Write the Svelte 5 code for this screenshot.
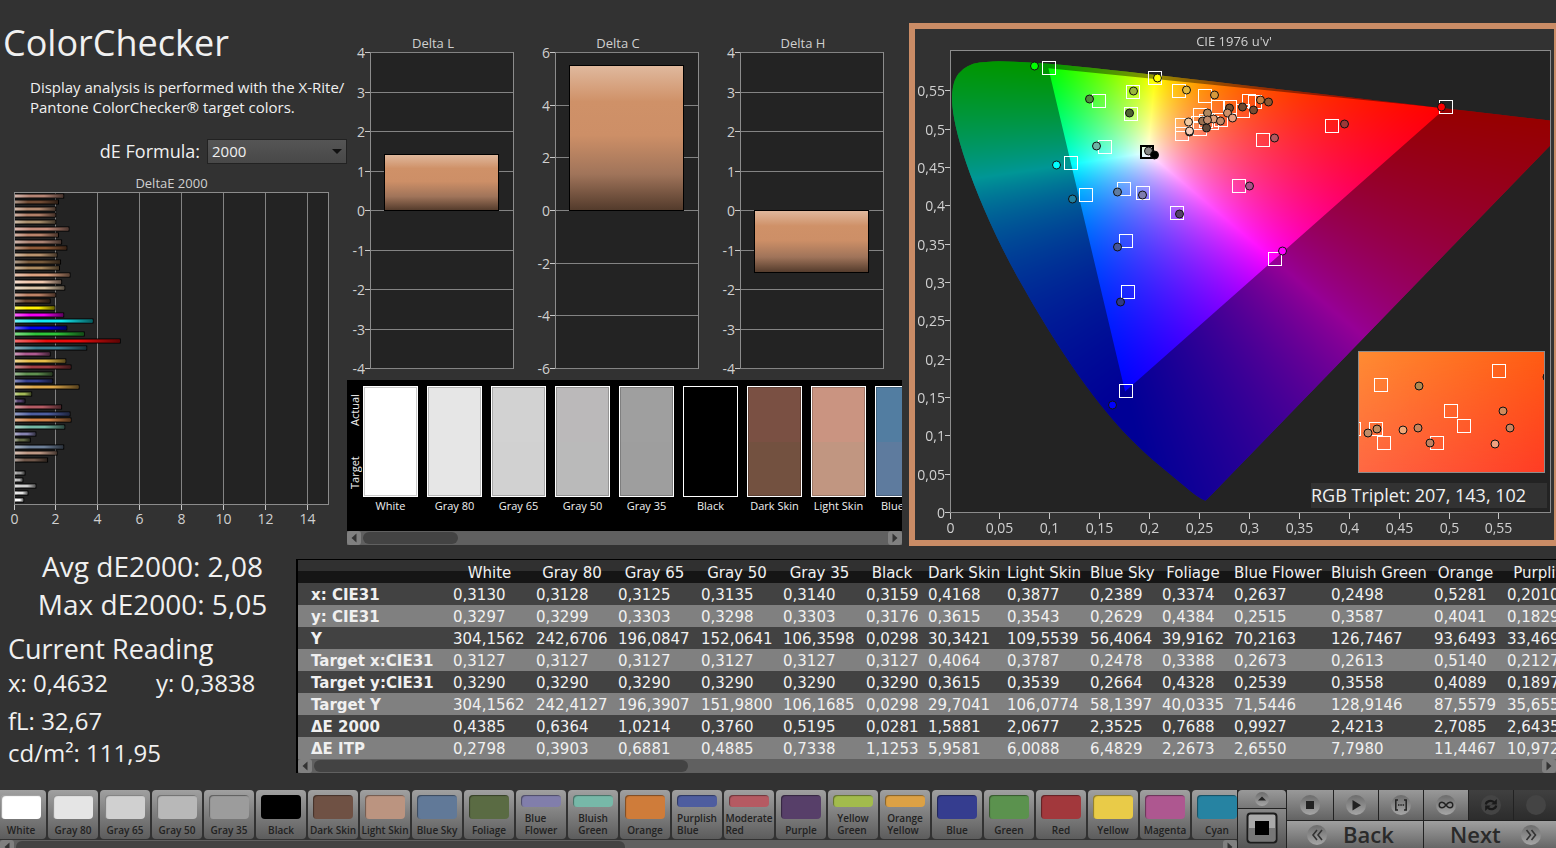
<script>
  import { onMount } from 'svelte';

  const deBars = [
    [2.35, '#b58474'], [2.1, '#6f4a33'], [1.97, '#b58c72'], [1.97, '#b07f68'], [1.97, '#a98e6c'],
    [2.6, '#c68d7c'], [2.1, '#b8836b'], [2.25, '#ad8474'], [2.5, '#8f5a38'], [2.03, '#b9936f'],
    [2.2, '#775a3c'], [2.15, '#ab8a5f'], [2.65, '#dca281'], [2.25, '#f0c8ae'], [2.4, '#ddc6a8'],
    [1.97, '#bd8367'], [1.7, '#68452f'], [1.93, '#fff200'], [2.35, '#f400f4'], [3.75, '#12e8f0'],
    [2.5, '#0000ee'], [3.33, '#2fc43a'], [5.05, '#e80c0c'], [3.45, '#3f7d8f'], [1.7, '#ad5a90'],
    [2.45, '#e6bc48'], [2.7, '#a03d42'], [1.83, '#5f8f50'], [1.83, '#35408f'], [3.08, '#dca64a'],
    [0.82, '#a5bb58'], [0.5, '#574470'], [2.25, '#b35b64'], [2.65, '#4d5ea0'], [2.7, '#d48347'],
    [2.4, '#73b8a4'], [1.02, '#8582b0'], [0.75, '#646b48'], [2.35, '#6d7f98'], [2.03, '#bd9784'],
    [1.58, '#6f5649'], [0, '#000000'], [0.5, '#999999'], [0.4, '#bbbbbb'], [1.02, '#d0d0d0'],
    [0.64, '#e6e6e6'], [0.44, '#ffffff']
  ];

  const deltas = [
    { title: 'Delta L', max: 4, step: 1, value: 1.42 },
    { title: 'Delta C', max: 6, step: 2, value: 5.5 },
    { title: 'Delta H', max: 4, step: 1, value: -1.56 }
  ];
  const ticksOf = (d) => {
    const list = [];
    for (let t = d.max; t >= -d.max; t -= d.step) list.push(t);
    return list;
  };
  const yOf = (d, t) => Math.round(176 - (t / d.max) * 158) + 0.5;

  const patches = [
    ['White', '#ffffff', '#ffffff'], ['Gray 80', '#e6e6e6', '#e6e6e6'], ['Gray 65', '#d2d2d2', '#d1d1d1'],
    ['Gray 50', '#bbb9ba', '#bababa'], ['Gray 35', '#9f9f9f', '#9e9e9e'], ['Black', '#000000', '#000000'],
    ['Dark Skin', '#7a5043', '#735140'], ['Light Skin', '#ca9481', '#c19681'], ['Blue Sky', '#527da1', '#5e7b9e']
  ];

  const columns = [
    ['White', 83], ['Gray 80', 82], ['Gray 65', 83], ['Gray 50', 82], ['Gray 35', 83], ['Black', 62],
    ['Dark Skin', 79], ['Light Skin', 83], ['Blue Sky', 72], ['Foliage', 72], ['Blue Flower', 97],
    ['Bluish Green', 103], ['Orange', 73], ['Purplish Blue', 120]
  ];
  const rows = [
    ['x: CIE31', '0,3130 0,3128 0,3125 0,3135 0,3140 0,3159 0,4168 0,3877 0,2389 0,3374 0,2637 0,2498 0,5281 0,2010'],
    ['y: CIE31', '0,3297 0,3299 0,3303 0,3298 0,3303 0,3176 0,3615 0,3543 0,2629 0,4384 0,2515 0,3587 0,4041 0,1829'],
    ['Y', '304,1562 242,6706 196,0847 152,0641 106,3598 0,0298 30,3421 109,5539 56,4064 39,9162 70,2163 126,7467 93,6493 33,4690'],
    ['Target x:CIE31', '0,3127 0,3127 0,3127 0,3127 0,3127 0,3127 0,4064 0,3787 0,2478 0,3388 0,2673 0,2613 0,5140 0,2127'],
    ['Target y:CIE31', '0,3290 0,3290 0,3290 0,3290 0,3290 0,3290 0,3615 0,3539 0,2664 0,4328 0,2539 0,3558 0,4089 0,1897'],
    ['Target Y', '304,1562 242,4127 196,3907 151,9800 106,1685 0,0298 29,7041 106,0774 58,1397 40,0335 71,5446 128,9146 87,5579 35,6550'],
    ['ΔE 2000', '0,4385 0,6364 1,0214 0,3760 0,5195 0,0281 1,5881 2,0677 2,3525 0,7688 0,9927 2,4213 2,7085 2,6435'],
    ['ΔE ITP', '0,2798 0,3903 0,6881 0,4885 0,7338 1,1253 5,9581 6,0088 6,4829 2,2673 2,6550 7,7980 11,4467 10,9720']
  ];

  const tiles = [
    ['White', '#ffffff'], ['Gray 80', '#e5e5e5'], ['Gray 65', '#d0d0d0'], ['Gray 50', '#b8b8b8'], ['Gray 35', '#9c9c9c'],
    ['Black', '#000000'], ['Dark Skin', '#6f5144'], ['Light Skin', '#bb9480'], ['Blue Sky', '#617998'], ['Foliage', '#5a6b43'],
    ['Blue Flower', '#817eab', 2], ['Bluish Green', '#77b8a8', 2], ['Orange', '#cf7c3a'], ['Purplish Blue', '#4e5d9f', 2],
    ['Moderate Red', '#b55a62', 2], ['Purple', '#573f69'], ['Yellow Green', '#a2bb4d', 2], ['Orange Yellow', '#dca145', 2],
    ['Blue', '#353d8f'], ['Green', '#5b924e'], ['Red', '#a2383c'], ['Yellow', '#e9cb48'], ['Magenta', '#ae5790'], ['Cyan', '#2683a2']
  ];

  const targets = [
    [1049, 68], [1155, 78], [1179, 91], [1205, 96], [1099, 101], [1133, 92], [1131, 114], [1105, 147], [1071, 163],
    [1086, 195], [1124, 189], [1143, 193], [1177, 213], [1126, 241], [1128, 292], [1126, 391], [1182, 125], [1182, 134],
    [1200, 115], [1200, 129], [1218, 107], [1198, 123], [1212, 123], [1221, 120], [1249, 101], [1255, 102], [1230, 107],
    [1243, 111], [1332, 126], [1263, 140], [1239, 186], [1275, 259], [1446, 107], [1206, 121]
  ];
  const readings = [
    [1034, 66, '#00ff00'], [1157, 78, '#ffff00'], [1186, 90, '#e0b93c'], [1214, 95, '#d69a3c'], [1133, 91, '#9ab83c'],
    [1089, 99, '#4f8c3c'], [1129, 113, '#4d6330'], [1096, 146, '#6cb5a5'], [1056, 165, '#00ffff'], [1072, 199, '#2080a0'],
    [1117, 192, '#5f7ba0'], [1142, 195, '#7f7db0'], [1179, 214, '#54406a'], [1117, 247, '#46569b'], [1120, 302, '#303a86'],
    [1112, 405, '#0000ff'], [1148, 151, '#888888'], [1154, 155, '#000000'], [1189, 132, '#604838'], [1188, 122, '#f2c9a0'],
    [1189, 131, '#f8d0b8'], [1202, 121, '#9a7050'], [1206, 128, '#604838'], [1207, 113, '#b08860'], [1213, 119, '#e0a078'],
    [1207, 120, '#c08c6c'], [1220, 121, '#c08868'], [1229, 108, '#704c30'], [1227, 113, '#d09068'], [1232, 118, '#e8a080'],
    [1242, 107, '#6e4a30'], [1253, 110, '#7a4a30'], [1260, 100, '#c87c3c'], [1268, 102, '#905830'], [1344, 124, '#9c3838'],
    [1274, 138, '#b45860'], [1249, 186, '#a85088'], [1282, 251, '#ff00ff'], [1441, 107, '#ff0000']
  ];
  const insetTargets = [[1381, 385], [1499, 371], [1451, 411], [1464, 426], [1376, 429], [1384, 443], [1437, 443], [1354, 429]];
  const insetReadings = [
    [1419, 386, '#b08850'], [1503, 411, '#cf8a5c'], [1510, 428, '#c88460'], [1495, 444, '#f0a080'], [1430, 443, '#c08060'],
    [1418, 428, '#c8845c'], [1403, 430, '#f0a878'], [1377, 429, '#c08c60'], [1368, 433, '#c08c68'], [1547, 377, '#402010']
  ];
  const axis = Array.from({ length: 12 }, (_, i) => i * 5);
  const axisLabel = (n) => (n === 0 ? '0' : String(n / 100).replace('.', ','));

  // CIE 1931 chromaticities of the spectral locus, 380 to 700 nm, closed along the purple line.
  const locus = [
    [0.1741, 0.005], [0.1733, 0.0048], [0.1689, 0.0069], [0.1644, 0.0109], [0.1566, 0.0177],
    [0.151, 0.0227], [0.144, 0.0297], [0.1355, 0.0399], [0.1241, 0.0578], [0.1096, 0.0868], [0.0913, 0.1327],
    [0.0687, 0.2007], [0.0454, 0.295], [0.0235, 0.4127], [0.0082, 0.5384], [0.0039, 0.6548], [0.0139, 0.7502],
    [0.0389, 0.812], [0.0743, 0.8338], [0.1142, 0.8262], [0.1547, 0.8059], [0.2296, 0.7543], [0.3016, 0.6923],
    [0.3731, 0.6245], [0.4441, 0.5547], [0.5125, 0.4866], [0.5752, 0.4242], [0.627, 0.3725], [0.6658, 0.334],
    [0.6915, 0.3083], [0.719, 0.2809], [0.7347, 0.2653], [0.7235, 0.2601], [0.1965, 0.0154]
  ];
  const gamut = [[0.68, 0.32], [0.265, 0.69], [0.15, 0.06]];

  let canvas;
  onMount(() => {
    const w = 600, h = 462, sx = 998, sy = 770;
    const toPx = ([x, y]) => {
      const d = -2 * x + 12 * y + 3;
      return [(4 * x / d) * sx, h - (9 * y / d) * sy];
    };
    const off = document.createElement('canvas');
    off.width = w;
    off.height = h;
    const octx = off.getContext('2d');
    const img = octx.createImageData(w, h);
    for (let j = 0; j < h; j++) {
      for (let i = 0; i < w; i++) {
        const u = i / sx, v = (h - j) / sy;
        const X = (9 * u) / (4 * v), Z = (12 - 3 * u - 20 * v) / (4 * v);
        const rgb = [
          2.4935 * X - 0.9314 - 0.4027 * Z,
          -0.8295 * X + 1.7627 + 0.0236 * Z,
          0.0358 * X - 0.0762 + 0.9569 * Z
        ].map((c) => Math.max(0, c));
        const m = Math.max(...rgb);
        const k = (j * w + i) * 4;
        for (let c = 0; c < 3; c++) img.data[k + c] = (255 * rgb[c]) / m;
        img.data[k + 3] = 255;
      }
    }
    octx.putImageData(img, 0, 0);
    const ctx = canvas.getContext('2d');
    const mid = (a, b) => [(a[0] + b[0]) / 2, (a[1] + b[1]) / 2];
    const outline = locus.map(toPx);
    ctx.beginPath();
    ctx.moveTo(...mid(outline[outline.length - 1], outline[0]));
    outline.forEach((p, i) => ctx.quadraticCurveTo(...p, ...mid(p, outline[(i + 1) % outline.length])));
    ctx.closePath();
    ctx.clip();
    ctx.drawImage(off, 0, 0);
    ctx.beginPath();
    ctx.rect(0, 0, w, h);
    gamut.map(toPx).forEach(([x, y], i) => (i ? ctx.lineTo(x, y) : ctx.moveTo(x, y)));
    ctx.closePath();
    ctx.fillStyle = 'rgba(0,0,0,0.41)';
    ctx.fill('evenodd');
  });
</script>

{#snippet scrollbar(thumb)}
  <div class="scroll">
    <button class="arrow" aria-label="Scroll left"><svg viewBox="0 0 14 14"><path d="M9.500 2.500v9L4.500 7z" /></svg></button>
    <div class="track"><div class="thumb" style:width={thumb}></div></div>
    <button class="arrow" aria-label="Scroll right"><svg viewBox="0 0 14 14"><path d="M4.500 2.500v9L9.500 7z" /></svg></button>
  </div>
{/snippet}

<main>
  <section class="top">
    <div class="intro">
      <h1>ColorChecker</h1>
      <p>Display analysis is performed with the X-Rite/<br />Pantone ColorChecker® target colors.</p>
      <div class="formula">
        <label for="formula">dE Formula:</label>
        <div class="select">
          <select id="formula"><option>2000</option></select>
          <svg viewBox="0 0 10 6"><path d="M0 0h10L5 5z" /></svg>
        </div>
      </div>
      <svg class="chart" viewBox="0 174 347 358" role="img" aria-label="DeltaE 2000">
        <defs>
          <linearGradient id="sheen">
            <stop offset="0" stop-color="#fff" stop-opacity=".4" />
            <stop offset=".3" stop-color="#fff" stop-opacity="0" />
            <stop offset=".6" stop-color="#000" stop-opacity="0" />
            <stop offset="1" stop-color="#000" stop-opacity=".6" />
          </linearGradient>
        </defs>
        <text class="title" x="171.500" y="188" text-anchor="middle">DeltaE 2000</text>
        <rect x="14.500" y="192.500" width="314" height="312" class="frame" />
        {#each [0, 2, 4, 6, 8, 10, 12, 14] as t}
          {@const x = Math.round(13.500 + t * 20.93) + 0.5}
          <path class="grid" d="M{x} 193V504" />
          <path class="tick" d="M{x} 505v5" />
          <text x={x} y="524" text-anchor="middle">{t}</text>
        {/each}
        {#each deBars as [v, color], i}
          {@const y = Math.round(193.600 + i * 6.61)}
          {#if v > 0}
            <rect x="15" y={y - 0.5} width={v * 20.93} height="5" fill="#000" />
            <rect x="15" y={y + 0.5} width={v * 20.93 - 1} height="3" fill={color} />
            <rect x="15" y={y + 0.5} width={v * 20.93 - 1} height="3" fill="url(#sheen)" />
          {/if}
        {/each}
      </svg>
    </div>

    <div class="middle">
      <div class="deltas">
        {#each deltas as d, i}
          <svg class="chart" viewBox="0 0 185 345" role="img" aria-label={d.title}>
            <defs>
              <linearGradient id="skin{i}" x2="0" y2="1">
                <stop offset="0" stop-color="#e0b99e" />
                <stop offset=".25" stop-color="#cf9168" />
                <stop offset=".48" stop-color="#cd8f67" />
                <stop offset=".75" stop-color="#a0745a" />
                <stop offset="1" stop-color="#523a2b" />
              </linearGradient>
            </defs>
            <text class="title" x="86" y="14" text-anchor="middle">{d.title}</text>
            <rect x="23.500" y="18.500" width="143" height="316" class="frame" />
            {#each ticksOf(d) as t}
              <path class="grid" d="M24 {yOf(d, t)}H166" />
              <path class="tick" d="M18 {yOf(d, t)}h5" />
              <text x="18" y={yOf(d, t) + 5} text-anchor="end">{t}</text>
            {/each}
            <rect x="37.500" y={Math.min(yOf(d, 0), yOf(d, d.value))} width="114" height={Math.abs(yOf(d, d.value) - yOf(d, 0))} fill="url(#skin{i})" stroke="#000" />
          </svg>
        {/each}
      </div>
      <div class="compare">
        <div class="patches">
          <div class="side"><span>Actual</span><span>Target</span></div>
          {#each patches as [name, actual, target]}
            <figure>
              <div class="patch" style:--actual={actual} style:--target={target}></div>
              <figcaption>{name}</figcaption>
            </figure>
          {/each}
        </div>
        {@render scrollbar('95px')}
      </div>
    </div>

    <div class="cie">
      <div class="plot">
        <div class="area"><canvas bind:this={canvas} width="600" height="462"></canvas></div>
        <svg class="chart" viewBox="915 29 639 511" role="img" aria-label="CIE 1976 u'v'">
          <defs>
            <linearGradient id="insetTop"><stop stop-color="#ff8c32" /><stop offset="1" stop-color="#ff5c12" /></linearGradient>
            <linearGradient id="insetBottom"><stop stop-color="#ff6844" /><stop offset="1" stop-color="#ff3c24" /></linearGradient>
            <linearGradient id="fade" x2="0" y2="1"><stop stop-color="#000" /><stop offset="1" stop-color="#fff" /></linearGradient>
            <mask id="lower"><rect x="1358" y="351" width="187" height="121" fill="url(#fade)" /></mask>
            <clipPath id="insetClip"><rect x="1359" y="352" width="185" height="120" /></clipPath>
          </defs>
          <text class="title" x="1234" y="46" text-anchor="middle">CIE 1976 u'v'</text>
          <rect class="outline" x="950.500" y="50.500" width="600" height="462" />
          {#each axis as n}
            {@const x = Math.round(949.500 + n * 9.98) + 0.5}
            {@const y = Math.round(512 - n * 7.67) + 0.5}
            <path class="tick" d="M{x} 513v6M{950} {y}h-5" />
            <text x={x} y="533" text-anchor="middle">{axisLabel(n)}</text>
            <text x="945" y={y + 5.5} text-anchor="end">{axisLabel(n)}</text>
          {/each}
          {#each targets as [x, y]}
            <rect class="target" x={x - 6.5} y={y - 6.5} width="13" height="13" />
          {/each}
          <rect class="target neutral" x="1141" y="146" width="12" height="12" />
          {#each readings as [x, y, c]}
            <circle cx={x + 0.5} cy={y} r="4" fill={c} class="reading" />
          {/each}
          <rect x="1358" y="351" width="187" height="122" fill="url(#insetTop)" />
          <rect x="1358" y="351" width="187" height="122" fill="url(#insetBottom)" mask="url(#lower)" />
          <g clip-path="url(#insetClip)">
            {#each insetTargets as [x, y]}
              <rect class="target" x={x - 6.5} y={y - 6.5} width="13" height="13" />
            {/each}
            {#each insetReadings as [x, y, c]}
              <circle cx={x} cy={y} r="4" fill={c} class="reading" />
            {/each}
          </g>
          <rect class="outline" x="1358.500" y="351.500" width="186" height="121" />
          <rect x="1311" y="483" width="236" height="25" fill="#323232" />
          <text class="triplet" x="1311" y="502">RGB Triplet: 207, 143, 102</text>
        </svg>
      </div>
    </div>
  </section>

  <section class="data">
    <div class="stats">
      <p class="big">Avg dE2000: 2,08</p>
      <p class="big">Max dE2000: 5,05</p>
      <h2>Current Reading</h2>
      <p class="pair"><span>x: 0,4632</span><span>y: 0,3838</span></p>
      <p class="first">fL: 32,67</p>
      <p>cd/m²: 111,95</p>
    </div>
    <div class="sheet">
      <div class="clip">
        <table>
          <colgroup><col style:width="155px" />{#each columns as [, w]}<col style:width="{w}px" />{/each}</colgroup>
          <thead><tr><td></td>{#each columns as [name]}<th scope="col">{name}</th>{/each}</tr></thead>
          <tbody>
            {#each rows as [name, values]}
              <tr><th scope="row">{name}</th>{#each values.split(' ') as v}<td>{v}</td>{/each}</tr>
            {/each}
          </tbody>
        </table>
      </div>
      {@render scrollbar('374px')}
    </div>
  </section>

  <footer>
    <div class="strip">
      <div class="tiles">
        {#each tiles as [name, color, lines]}
          <button class="tile" class:tall={lines}>
            <i style:background={color}></i>
            <span>{#if lines}{name.split(' ')[0]}<br />{name.split(' ')[1]}{:else}{name}{/if}</span>
          </button>
        {/each}
      </div>
      {@render scrollbar('609px')}
    </div>
    <div class="mode">
      <button class="up" aria-label="Expand"><svg viewBox="0 0 16 16"><circle cx="8" cy="8" r="7" fill="url(#knob)" /><path d="M4 9.500h8L8 5.500z" fill="#222" /></svg></button>
      <button class="display" aria-label="Pattern window">
        <svg viewBox="0 0 32 32"><rect x="1.500" y="1.500" width="29" height="29" rx="3" fill="#aaa" stroke="#1c1c1c" stroke-width="2" /><path d="M3 16h26v13H3z" fill="#777" /><rect x="9" y="9" width="14" height="14" fill="#000" /></svg>
      </button>
    </div>
    <div class="controls">
      <svg class="defs" aria-hidden="true"><defs><linearGradient id="knob" x2="0" y2="1"><stop stop-color="#6c6c6c" /><stop offset="1" stop-color="#a6a6a6" /></linearGradient></defs></svg>
      <div class="keys">
        <button aria-label="Stop"><svg viewBox="0 0 20 20"><circle cx="10" cy="10" r="10" fill="url(#knob)" /><path d="M6 6h8v8H6z" fill="#222" /></svg></button>
        <button aria-label="Play"><svg viewBox="0 0 20 20"><circle cx="10" cy="10" r="10" fill="url(#knob)" /><path d="M6.500 5v10.500L15 10.200z" fill="#222" /></svg></button>
        <button aria-label="Read range"><svg viewBox="0 0 20 20"><circle cx="10" cy="10" r="10" fill="url(#knob)" /><path d="M7 5H4.800v10H7M13 5h2.200v10H13M7 10h1.500M9.300 10h1.500M11.600 10h1.500" fill="none" stroke="#222" stroke-width="1.500" /></svg></button>
        <button aria-label="Continuous"><svg viewBox="0 0 20 20"><circle cx="10" cy="10" r="10" fill="url(#knob)" /><path d="M10 10C8.500 8 7.500 7.200 6 7.200a2.800 2.800 0 0 0 0 5.600C7.500 12.800 8.500 12 10 10s2.500-2.800 4-2.800a2.800 2.800 0 0 1 0 5.600C12.500 12.800 11.500 12 10 10z" fill="none" stroke="#222" stroke-width="1.400" /></svg></button>
        <button class="off" aria-label="Refresh"><svg viewBox="0 0 20 20"><circle cx="10" cy="10" r="10" fill="#444" /><path d="M4.800 9.500c.5-3.200 5-5 8.200-2.400M15.200 10.500c-.5 3.200-5 5-8.200 2.400" fill="none" stroke="#1a1a1a" stroke-width="2.200" /><path d="M15.800 4v5.500h-5.500zM4.200 16v-5.500h5.500z" fill="#1a1a1a" /></svg></button>
        <button class="off" aria-label="Record"><svg viewBox="0 0 20 20"><circle cx="10" cy="10" r="10" fill="#444" /></svg></button>
      </div>
      <div class="nav">
        <button class="back"><svg viewBox="0 0 20 20"><circle cx="10" cy="10" r="10" fill="url(#knob)" /><path d="M10 5l-4 5 4 5M15 5l-4 5 4 5" fill="none" stroke="#333" stroke-width="1.600" /></svg>Back</button>
        <button class="next">Next<svg viewBox="0 0 20 20"><circle cx="10" cy="10" r="10" fill="url(#knob)" /><path d="M5.500 5l4 5-4 5M10.500 5l4 5-4 5" fill="none" stroke="#333" stroke-width="1.600" /></svg></button>
      </div>
    </div>
  </footer>
</main>

<style>
  :global(body) { background: #323232; }
  main {
    height: 100vh; overflow: hidden; display: flex; flex-direction: column;
    font-family: "Open Sans", "Noto Sans", sans-serif; color: #f0f0f0; background: #323232;
  }
  h1, h2, p, figure { margin: 0; font-weight: 400; }
  button { font: inherit; border: 0; padding: 0; margin: 0; color: #222; }

  .top { display: grid; grid-template-columns: 347fr 555fr 654fr; flex: none; }
  .intro { padding-top: 17px; min-width: 0; }
  h1 { font-size: 36px; line-height: 52px; padding-left: 3px; white-space: nowrap; }
  .intro p { font-size: 15px; line-height: 20px; margin-top: 8px; padding-left: 30px; white-space: nowrap; }
  .formula { display: flex; justify-content: flex-end; align-items: center; gap: 7px; margin: 21px 0 10px; height: 26px; }
  .formula label { font-size: 18px; }
  .select { position: relative; width: 140px; }
  .select select {
    appearance: none; width: 100%; height: 25px; padding: 0 4px; border: 1px solid #222; border-radius: 0;
    font: 15px "Open Sans", sans-serif; color: #f0f0f0; background: linear-gradient(#555, #484848);
  }
  .select svg { position: absolute; right: 5px; top: 10px; width: 10px; height: 6px; fill: #111; }

  .chart { display: block; width: 100%; height: auto; }
  .chart text { font-size: 14px; fill: #d0d0d0; }
  .chart .title { font-size: 13px; }
  .chart .triplet { font-size: 18px; fill: #f0f0f0; }
  .frame { fill: #232323; stroke: #8c8c8c; }
  .grid { stroke: #838383; }
  .tick { stroke: #c8c8c8; }
  .outline { fill: none; stroke: #8c8c8c; }
  .target { fill: none; stroke: #fff; stroke-width: 1; }
  .neutral { stroke: #000; stroke-width: 2; }
  .reading { stroke: #111; }

  .middle { padding-top: 34px; min-width: 0; display: flex; flex-direction: column; }
  .deltas { display: grid; grid-template-columns: repeat(3, 1fr); }
  .compare { margin-top: 1px; background: #000; }
  .patches { display: flex; height: 151px; overflow: hidden; box-sizing: border-box; padding-top: 6px; }
  .side {
    flex: none; width: 16px; height: 111px; box-sizing: border-box; padding: 8px 0; display: flex; flex-direction: row-reverse;
    justify-content: space-between; writing-mode: vertical-rl; transform: rotate(180deg); font-size: 11px; line-height: 16px;
  }
  figure { flex: none; width: 64px; }
  .patch {
    width: 55px; height: 111px; box-sizing: border-box; border: 1px solid #fff;
    background: linear-gradient(var(--actual) 50%, var(--target) 50%); box-shadow: inset 0 0 0 1px #0003;
  }
  figcaption { width: 55px; font-size: 11px; line-height: 18px; text-align: center; white-space: nowrap; }

  .scroll { display: flex; height: 14px; background: #606060; }
  .arrow { flex: none; width: 14px; height: 14px; background: #808080; border-radius: 3px; }
  .arrow svg { display: block; fill: #333; }
  .track { flex: 1; padding: 1px 2px; }
  .thumb { height: 12px; max-width: 100%; border-radius: 6px; background: #434343; }

  .cie { margin: 23px 0 0 7px; border: 6px solid #ca8c66; border-right-width: 2px; align-self: start; min-width: 0; }
  .plot { position: relative; }
  .plot .chart { position: relative; }
  .area { position: absolute; left: 5%; left: 5.480%; top: 4.300%; width: 93.900%; height: 90.410%; background: #232323; }
  .area canvas { display: block; width: 100%; height: 100%; }

  .data { display: flex; flex: none; margin-top: 13px; }
  .stats { flex: none; width: 296px; font-size: 24px; line-height: 32px; margin-top: -12px; }
  .stats p, h2 { padding-left: 8px; }
  .stats .big { font-size: 28px; line-height: 38px; padding: 0 0 0 9px; text-align: center; }
  h2 { font-size: 27px; line-height: 36px; margin-top: 8px; }
  .pair { display: flex; gap: 48px; }
  .stats .first { margin-top: 6px; }
  .sheet { flex: 1; min-width: 0; border-top: 1px solid #000; border-left: 2px solid #000; }
  .clip { overflow: hidden; }
  table { table-layout: fixed; width: 1329px; border-collapse: collapse; font: 15px "DejaVu Sans", sans-serif; }
  tr { height: 22px; }
  th, td { padding: 2px 0 0; line-height: 20px; text-align: left; white-space: nowrap; }
  tbody td { color: #f0f0f0; }
  tbody th { padding-left: 13px; font-weight: 700; }
  thead tr { height: 23px; background: linear-gradient(#303030 50%, #151515 50%); }
  thead th { font-weight: 400; padding-right: 10px; text-align: center; }
  tbody tr { background: #424242; }
  tbody tr:nth-child(even) { background: #808080; }

  footer { display: flex; flex: none; height: 58px; margin-top: auto; overflow: hidden; }
  .strip { flex: 1; min-width: 0; }
  .tiles { display: flex; gap: 2px; overflow: hidden; height: 49px; margin-bottom: 1px; }
  .tile {
    flex: none; width: 50px; height: 49px; border-radius: 4px; background: linear-gradient(#a0a0a0, #5c5c5c);
    display: flex; flex-direction: column; align-items: center; justify-content: space-between; box-sizing: border-box; padding: 5px 0 3px;
    font-size: 10px; font-weight: 600; line-height: 12px; text-align: left; white-space: nowrap;
  }
  .tile:first-child { margin-left: -4px; }
  .tile i { width: 40px; height: 24px; border-radius: 4px; box-shadow: inset 1px 1px 1px #0006; }
  .tall i { height: 12px; }
  .mode { flex: none; width: 50px; display: flex; flex-direction: column; gap: 1px; background: #222; }
  .mode button { display: grid; place-items: center; margin: 0 1px; background: linear-gradient(#999, #777); }
  .mode .up { height: 18px; border-radius: 4px 4px 0 0; }
  .mode .up svg { width: 16px; }
  .mode .display { height: 40px; background: linear-gradient(#888, #555); }
  .mode .display svg { width: 32px; }
  .controls { flex: none; width: 269px; display: flex; flex-direction: column; gap: 1px; background: #222; overflow: hidden; }
  .defs { position: absolute; width: 0; height: 0; }
  .keys { display: grid; grid-template-columns: 46px repeat(5, 44px); gap: 1px; }
  .nav { display: grid; grid-template-columns: 136px 136px; gap: 1px; }
  .keys button { height: 30px; display: grid; place-items: center; background: linear-gradient(#999, #636363); }
  .keys button.off { background: linear-gradient(#404040, #2c2c2c); }
  .keys svg, .nav svg { width: 20px; height: 20px; flex: none; }
  .nav button {
    height: 27px; display: flex; align-items: center; gap: 16px; padding: 0 20px;
    font-size: 22px; font-weight: 600; line-height: 27px; background: linear-gradient(#a0a0a0, #666); color: #2a2a2a;
  }
  .nav .next { gap: 20px; padding: 0 26px; }
</style>
